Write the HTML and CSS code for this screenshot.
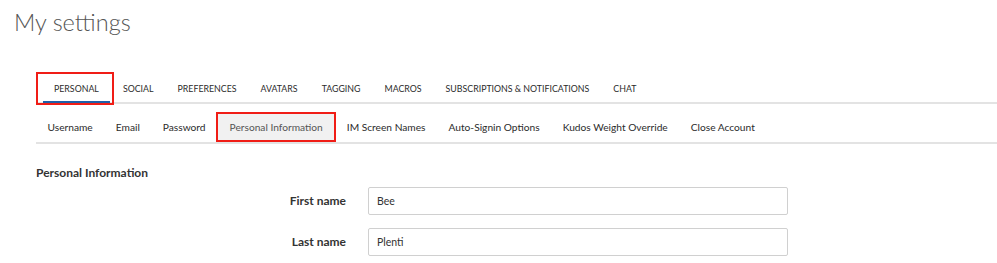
FILE: index.html
```html
<!DOCTYPE html>
<html lang="en">
<head>
  <meta charset="UTF-8">
  <meta name="viewport" content="width=device-width, initial-scale=1.0">
  <title>My settings</title>
  <link rel="stylesheet" href="styles.css">
</head>
<body>
  <h1 class="page-title">My settings</h1>
  <div class="settings">
    <ul class="main-tabs">
      <li class="main-tab active marked">PERSONAL</li>
      <li class="main-tab">SOCIAL</li>
      <li class="main-tab">PREFERENCES</li>
      <li class="main-tab">AVATARS</li>
      <li class="main-tab">TAGGING</li>
      <li class="main-tab">MACROS</li>
      <li class="main-tab">SUBSCRIPTIONS &amp; NOTIFICATIONS</li>
      <li class="main-tab">CHAT</li>
    </ul>
    <ul class="sub-tabs">
      <li class="sub-tab">Username</li>
      <li class="sub-tab">Email</li>
      <li class="sub-tab">Password</li>
      <li class="sub-tab active marked">Personal Information</li>
      <li class="sub-tab">IM Screen Names</li>
      <li class="sub-tab">Auto-Signin Options</li>
      <li class="sub-tab">Kudos Weight Override</li>
      <li class="sub-tab">Close Account</li>
    </ul>
    <h2 class="section-title">Personal Information</h2>
    <form class="profile-form">
      <div class="form-row">
        <label for="firstName">First name</label>
        <input type="text" id="firstName" value="Bee">
      </div>
      <div class="form-row">
        <label for="lastName">Last name</label>
        <input type="text" id="lastName" value="Plenti">
      </div>
    </form>
  </div>
</body>
</html>
```

FILE: styles.css
```css
* {
  margin: 0;
  padding: 0;
  box-sizing: border-box;
  font-family: 'Lato', 'Liberation Sans', sans-serif;
}

body {
  background: #fff;
  color: #333;
  overflow: hidden;
}

.page-title {
  font-size: 23.5px;
  font-weight: 300;
  color: #555;
  padding: 7px 0 0 14px;
  line-height: 30px;
}

.settings {
  padding: 0 0 0 36px;
}

.main-tabs {
  list-style: none;
  display: flex;
  margin-top: 35px;
  border-bottom: 2px solid #e3e3e3;
}

.main-tab {
  position: relative;
  font-size: 8.8px;
  color: #2b2b2b;
  padding: 11px 11px 6px;
  margin-right: 2px;
  line-height: 12px;
  border-bottom: 2px solid transparent;
  margin-bottom: -1px;
}

.main-tab:first-child {
  margin-left: 7px;
}

.main-tab.active {
  border-bottom-color: #1f5fa8;
}

.sub-tabs {
  list-style: none;
  display: flex;
  padding-top: 9px;
  border-bottom: 2px solid #e3e3e3;
}

.sub-tab {
  position: relative;
  font-size: 10.2px;
  color: #2b2b2b;
  padding: 0 11.5px;
  line-height: 28px;
  margin-bottom: 1px;
}

.sub-tab.active {
  background: #f1f1f1;
  color: #555;
  padding: 0 12.5px;
}

/* red annotation boxes drawn over the tabs */
.marked::after {
  content: '';
  position: absolute;
  border: 2px solid #f01d16;
}

.main-tab.marked::after {
  top: 0;
  bottom: -4px;
  left: -7px;
  right: -4px;
}

.sub-tab.marked::after {
  top: -1px;
  bottom: -1px;
  left: -1px;
  right: -1px;
}

.section-title {
  font-size: 12px;
  font-weight: 700;
  color: #333;
  margin-top: 21px;
  line-height: 16px;
}

.profile-form {
  display: flex;
  flex-direction: column;
  gap: 13px;
  margin-top: 6px;
}

.form-row {
  display: flex;
  align-items: center;
  gap: 22px;
}

.form-row label {
  width: 310px;
  text-align: right;
  font-size: 12px;
  font-weight: 700;
  color: #333;
  margin-top: -2px;
}

.form-row input {
  width: 420px;
  height: 28px;
  border: 1px solid #d0d0d0;
  border-radius: 2px;
  padding: 0 8px;
  font-size: 10.5px;
  color: #333;
}
```
